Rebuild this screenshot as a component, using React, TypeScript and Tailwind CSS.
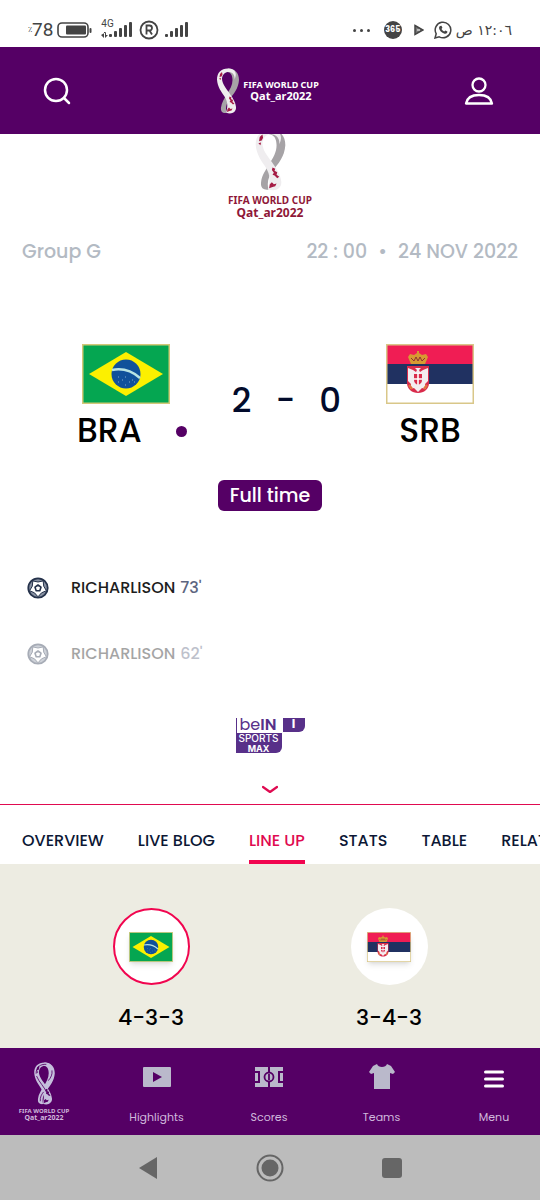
import React from "react";

type P = { className?: string };

function Trophy({ className, mono }: P & { mono?: boolean }) {
  const light = mono ? "#c5bfdc" : "#efedef";
  const dark = mono ? "#c5bfdc" : "#a6a3a6";
  const red = mono ? "#550065" : "#a51c45";
  return (
    <svg viewBox="0 0 44 92" className={className} aria-hidden="true" fill="none">
      <path d="M22 1C36 1 44 10 44 24C43 41 33 52 26 61C20 69 16 78 19 90C11 91 7 87 8 79C9 69 15 61 20 52C26 43 31 34 31 24C31 14 27 8 20 8Z" fill={dark} />
      <path d="M24 1C9 0 0 9 0 23C1 38 9 48 15 57C20 65 23 74 18 89C29 94 39 88 38 78C37 67 30 58 24 49C17 39 10 31 10 21C11 12 17 7 25 8C32 9 36 15 35 23C41 10 36 2 24 1Z" fill={light} />
      {mono && <path d="M4 25C4 12 12 4 26 5M5 30C10 43 22 53 28 68M30 40C36 33 39 27 38 18M13 84C12 75 16 69 20 64" stroke={red} strokeWidth="1.800" />}
      <path d="M6 12l4-4 1 5-2 4-4 1zM4 21l4-1-1 4zM25 57l4 2-1 3 4 2-1 4 4 3-3 2-4-4-3-1 2-3-3-4zM21 82l3-3 3 3 4-1-2 4-4 1-5 2z" fill={red} />
    </svg>
  );
}

function Brand({ className, yearClass }: P & { yearClass: string }) {
  return (
    <div className={className}>
      <div className="font-['Noto_Sans',sans-serif] font-bold">FIFA WORLD CUP</div>
      <div className={yearClass}>Qat_ar2022</div>
    </div>
  );
}

function Brazil({ className }: P) {
  return (
    <svg viewBox="0 0 88 60" className={className} role="img" aria-label="Brazil">
      <rect x="0.75" y="0.75" width="86.5" height="58.5" fill="#05a651" stroke="#d3c878" strokeWidth="1.5" />
      <path d="M7 30L44 8l37 22-37 22z" fill="#fcf000" />
      <circle cx="44" cy="30" r="14.5" fill="#10519b" />
      <path d="M30 26c10-2 20 1 28 8" stroke="#b9e4e4" strokeWidth="2.5" fill="none" />
      <path d="M36 33h1m3 3h1m2-3h1m3 5h1m2-2h1m-8 5h1m-8-3h1m15 0h1" stroke="#7fa9cf" strokeWidth="1" />
    </svg>
  );
}

function Serbia({ className }: P) {
  return (
    <svg viewBox="0 0 88 60" className={className} role="img" aria-label="Serbia">
      <rect width="88" height="60" fill="#fff" />
      <path d="M0 0h88v20H0z" fill="#f01d54" />
      <path d="M0 20h88v20H0z" fill="#203161" />
      <path d="M21 22h22v17c0 6-5 10-11 10-6 0-11-4-11-10z" fill="#d92b4b" />
      <path d="M32 48l-4-4-4 1 1-5-3-3V24l5 2 3 2 1-2-2-2h6l-2 2 1 2 3-2 5-2v13l-3 3 1 5-4-1z" fill="#f3edf0" />
      <path d="M28 30h8v6c0 3-2 4-4 5-2-1-4-2-4-5z" fill="#d92b4b" />
      <path d="M32 29v12m-4-6h8" stroke="#fff" strokeWidth="1.6" />
      <path d="M23 41l3 4m15-4l-3 4" stroke="#e0703f" strokeWidth="2.500" />
      <path d="M25 20l-3-7 2-3 4 1 3-2V7h2v2l3 2 4-1 2 3-3 7z" fill="#d79a32" />
      <path d="M25 14l3 3 2-4 2 4 2-4 2 4 3-3" stroke="#8d3034" fill="none" />
      <rect x="0.75" y="0.75" width="86.5" height="58.5" fill="none" stroke="#d9c789" strokeWidth="1.5" />
    </svg>
  );
}

function Ball() {
  return (
    <svg viewBox="0 0 22 22" className="h-[22px] w-[22px]" fill="none" stroke="#25324b" strokeLinejoin="round" aria-hidden="true">
      <circle cx="11" cy="11" r="9.7" fill="#8790a1" strokeWidth="1.800" />
      <path d="M11 5L16.200 3.900L16.700 9.150L19.400 13.700L14.500 15.850L11 19.800L7.500 15.850L2.600 13.700L5.300 9.150L5.800 3.900Z" fill="#fff" strokeWidth="1" />
      <path d="M11 8l3 2.200-1.200 3.500H9.200L8 10.200z" strokeWidth="1.600" />
    </svg>
  );
}

function Signal() {
  return (
    <svg viewBox="0 0 24 16" className="h-4 w-6" fill="#444" aria-hidden="true">
      <rect y="12" width="3" height="3" rx="1" />
      <rect x="5" y="9" width="3" height="6" rx="1" />
      <rect x="10" y="6" width="3" height="9" rx="1" />
      <rect x="15" y="3" width="3" height="12" rx="1" />
      <rect x="20" y="0" width="3" height="15" rx="1" />
    </svg>
  );
}

function StatusBar() {
  return (
    <div className="flex h-[47px] items-center justify-between px-7 pt-[13px] text-[#444]">
      <div className="flex items-center">
        <span className="text-[8px]">٪</span>
        <span className="font-['Roboto',sans-serif] text-[19px] leading-5">78</span>
        <svg viewBox="0 0 36 16" className="ml-1 h-4 w-9" fill="none" aria-hidden="true">
          <rect x="1" y="1" width="30" height="14" rx="4" stroke="#444" strokeWidth="1.6" />
          <rect x="9" y="3.500" width="20" height="9" rx="1" fill="#444" />
          <rect x="32.500" y="6" width="2" height="5" rx="1" fill="#444" />
        </svg>
        <div className="relative ml-4 flex items-center">
          <span className="absolute -top-1 -left-2 font-['Roboto',sans-serif] text-[10px] leading-3">4G</span>
          <svg viewBox="0 0 8 6" className="absolute bottom-0 -left-2 h-[6px] w-2" fill="#444" aria-hidden="true">
            <path d="M0 3l3 3V0H4v6l3-3H5V0" />
          </svg>
          <Signal />
        </div>
        <svg viewBox="0 0 20 20" className="ml-1.5 h-5 w-5" fill="none" stroke="#444" strokeWidth="1.800" aria-hidden="true">
          <circle cx="10" cy="10" r="8.500" />
          <path d="M7.500 14.500v-9h3a2.500 2.500 0 0 1 0 5h-3m3 0l2.500 4" />
        </svg>
        <span className="ml-1.5"><Signal /></span>
      </div>
      <div className="flex items-center">
        <span className="flex gap-1">
          <i className="h-[3px] w-[3px] rounded-full bg-[#444]" />
          <i className="h-[3px] w-[3px] rounded-full bg-[#444]" />
          <i className="h-[3px] w-[3px] rounded-full bg-[#444]" />
        </span>
        <span className="ml-[14px] flex h-[18px] w-[18px] items-center justify-center rounded-full bg-[#444] text-[8px] font-bold text-white">365</span>
        <svg viewBox="0 0 10 12" className="ml-3 h-3 w-[10px]" aria-hidden="true">
          <path d="M1 1.500l8 4.500-8 4.500z" fill="#777" stroke="#444" strokeWidth="1.500" />
          <path d="M3 6h3" stroke="#fff" />
        </svg>
        <svg viewBox="0 0 18 18" className="ml-[10px] h-[18px] w-[18px]" fill="none" aria-hidden="true">
          <path d="M1 17l1.200-4.200A7.800 7.800 0 1 1 5.200 15.800z" stroke="#444" strokeWidth="1.500" />
          <path d="M6 5l1.500-.3.900 2.100-.9 1.200c.7 1.300 1.500 2 2.700 2.600l1.200-1 2 1c0 1.700-1.400 2.500-2.800 2.100C7.500 12 5.300 9.500 5 7c0-.9.400-1.500 1-2z" fill="#444" />
        </svg>
        <span dir="rtl" className="ml-1 font-['DejaVu_Sans','Noto_Sans',sans-serif] text-sm leading-5">١٢:٠٦ ص</span>
      </div>
    </div>
  );
}

function ChannelLogo() {
  return (
    <div className="mx-auto w-[69px] text-[#583089]" role="group" aria-label="beIN Sports Max 1">
      <div className="flex h-[15px] items-start">
        <div className="h-[15px] w-[46px] border-l border-[#583089] pl-[3px] text-base leading-[13px]">be<b className="font-semibold">IN</b></div>
        <div className="ml-px h-[14px] w-[22px] rounded-br-md bg-[#583089] text-center text-xs leading-[12px] font-bold text-white">I</div>
      </div>
      <div className="h-5 w-[46px] rounded-br-md bg-[#583089] text-center font-['Inter',sans-serif] text-white">
        <div className="text-[10px] leading-[11px] font-medium">SPORTS</div>
        <div className="text-[9px] leading-[9px] font-bold">MAX</div>
      </div>
    </div>
  );
}

const goals = [
  { name: "RICHARLISON", minute: "73'", faded: false },
  { name: "RICHARLISON", minute: "62'", faded: true },
];

const tabs = ["OVERVIEW", "LIVE BLOG", "LINE UP", "STATS", "TABLE", "RELATED"];

export default function App() {
  return (
    <div className="flex min-h-screen flex-col overflow-x-hidden bg-white font-['Poppins','Inter',sans-serif] text-black">
      <StatusBar />
      <header className="flex h-[87px] items-center justify-between bg-[#550065] pr-[45px] pl-[41px] text-white">
        <button aria-label="Search" className="flex w-8 justify-center">
          <svg viewBox="0 0 28 28" className="h-7 w-7" fill="none" stroke="#fff" strokeWidth="2.500" strokeLinecap="round" aria-hidden="true">
            <circle cx="13" cy="13" r="11" />
            <path d="M21 21l5 5" />
          </svg>
        </button>
        <a href="#home" className="flex items-center gap-1" aria-label="Tournament home">
          <Trophy className="h-[46px] w-[22px]" />
          <Brand className="text-center text-[9px] leading-[10px]" yearClass="font-['Noto_Sans',sans-serif] text-[11px] leading-[11px] font-bold" />
        </a>
        <button aria-label="Account" className="flex w-8 justify-center">
          <svg viewBox="0 0 30 30" className="h-[30px] w-[30px]" fill="none" stroke="#fff" strokeWidth="2.300" strokeLinejoin="round" aria-hidden="true">
            <circle cx="15" cy="9" r="6.500" />
            <path d="M2 27.500c1-5.500 6-8.500 13-8.500s12 3 13 8.500z" />
          </svg>
        </button>
      </header>

      <main className="flex grow flex-col">
        <div className="flex h-[86px] flex-col items-center justify-end overflow-hidden text-[#8f1838]">
          <Trophy className="h-[62px] w-[31px] shrink-0" />
          <Brand className="mt-1 text-center text-[10px] leading-[11px]" yearClass="font-['Noto_Sans',sans-serif] text-xs leading-[14px] font-bold" />
        </div>
        <div className="mt-[18px] flex items-center justify-between px-[22px] text-[19px] leading-7 font-medium text-[#b3bac3]">
          <span>Group G</span>
          <span className="flex gap-[11px]"><span>22 : 00</span><span>•</span><span>24 NOV 2022</span></span>
        </div>

        <section className="mt-[78px] flex justify-between pr-[66px] pl-[65px] font-medium">
          <div className="flex w-[122px] flex-col items-center">
            <Brazil className="h-[60px] w-[88px]" />
            <div className="flex w-full items-center justify-between pl-3 text-[33px] leading-[54px]">
              <span>BRA</span>
              <i className="h-[11px] w-[11px] rounded-full bg-[#550065]" />
            </div>
          </div>
          <div className="flex gap-6 pt-9 text-[34px] leading-10 text-[#020b2b]">
            <span>2</span><span>-</span><span>0</span>
          </div>
          <div className="flex w-[88px] flex-col items-center">
            <Serbia className="h-[60px] w-[88px]" />
            <div className="text-[33px] leading-[54px]">SRB</div>
          </div>
        </section>
        <div className="mx-auto mt-[22px] rounded-md bg-[#550065] px-3 text-[19px] leading-[31px] font-medium text-white">Full time</div>

        <ul className="mt-[65px] px-[27px] font-medium">
          {goals.map((g) => (
            <li key={g.minute} className={g.faded ? "mt-[42px] flex items-center opacity-40" : "flex items-center"}>
              <Ball />
              <span className="ml-[22px] text-base leading-6 text-[#1d1d1d]">{g.name}</span>
              <span className="ml-[5px] text-base leading-6 text-[#5d6580]">{g.minute}</span>
            </li>
          ))}
        </ul>
        <div className="mt-[52px]"><ChannelLogo /></div>
        <button aria-label="Show more" className="mx-auto mt-7 flex h-[23px] w-10 justify-center pt-1">
          <svg viewBox="0 0 16 9" className="h-[9px] w-4" fill="none" stroke="#df0a50" strokeWidth="2.200" strokeLinecap="round" strokeLinejoin="round" aria-hidden="true"><path d="M1 2L8 7l7-5" /></svg>
        </button>

        <nav className="flex h-[60px] shrink-0 gap-[34px] overflow-hidden border-t border-t-[#e00a50] px-[22px] text-base font-medium text-[#0c1735]">
          {tabs.map((t) => (
            <a key={t} href="#tab" className={t === "LINE UP" ? "shrink-0 border-b-4 border-[#f1054f] pt-6 text-[#e00a50]" : "shrink-0 pt-6"}>{t}</a>
          ))}
        </nav>
        <section className="grid grow grid-cols-2 bg-[#edece2] px-8 pt-11 text-[22px] font-medium">
          <button className="flex flex-col items-center self-start">
            <span className="flex h-[77px] w-[77px] items-center justify-center rounded-full border-2 border-[#f1054f] bg-white"><Brazil className="h-[30px] w-11 shadow-md" /></span>
            <span className="mt-4">4-3-3</span>
          </button>
          <button className="flex flex-col items-center self-start">
            <span className="flex h-[77px] w-[77px] items-center justify-center rounded-full bg-white"><Serbia className="h-[30px] w-11 shadow-md" /></span>
            <span className="mt-4">3-4-3</span>
          </button>
        </section>
      </main>

      <nav className="flex h-[87px] shrink-0 justify-between bg-[#550065] pr-[18px] pl-4 text-[11px] text-[#d0b8dc]">
        <a href="#home" className="flex w-14 flex-col items-center pt-[14px]">
          <Trophy mono className="h-[43px] w-[21px]" />
          <Brand className="mt-[3px] text-center text-[6px] leading-[6px] whitespace-nowrap" yearClass="font-['Noto_Sans',sans-serif] text-[7px] leading-[7px] font-bold" />
        </a>
        <a href="#highlights" className="flex w-14 flex-col items-center justify-between pt-[19px] pb-[10px]">
          <svg viewBox="0 0 28 20" className="h-5 w-7" aria-hidden="true"><rect width="28" height="20" rx="1" fill="#bab9cb" /><path d="M10 5l9 5-9 5z" fill="#550065" /></svg>
          Highlights
        </a>
        <a href="#scores" className="flex w-14 flex-col items-center justify-between pt-[19px] pb-[10px]">
          <svg viewBox="0 0 28 20" className="h-5 w-7" fill="none" aria-hidden="true">
            <path d="M0 0h13v20H0v-4h5V4H0zM15 0h13v4h-5v12h5v4H15z" fill="#bab9cb" />
            <path d="M0 6h3v8H0zM25 6h3v8h-3z" fill="#bab9cb" />
            <circle cx="14" cy="10" r="4.500" fill="#bab9cb" stroke="#550065" strokeWidth="1.800" />
            <path d="M14 7v6" stroke="#550065" strokeWidth="1.800" />
          </svg>
          Scores
        </a>
        <a href="#teams" className="flex w-14 flex-col items-center justify-between pt-4 pb-[10px]">
          <svg viewBox="0 0 26 26" className="h-[26px] w-[26px]" fill="#bab9cb" aria-hidden="true"><path d="M8 0L4 2 0 8l2 2 3-1v16h16V9l3 1 2-2-4-6-4-2c-1 4-9 4-10 0z" /></svg>
          Teams
        </a>
        <button className="flex w-14 flex-col items-center justify-between pt-[22px] pb-[10px]">
          <svg viewBox="0 0 20 18" className="h-[18px] w-5" stroke="#fff" strokeWidth="3" strokeLinecap="round" aria-hidden="true"><path d="M1.500 2h17M1.500 9h17M1.500 16h17" /></svg>
          Menu
        </button>
      </nav>
      <div className="flex h-[65px] shrink-0 items-center justify-center gap-[98px] bg-[#bcbcbc]">
        <button aria-label="Back"><svg viewBox="0 0 20 24" className="h-6 w-5" aria-hidden="true"><path d="M19 1v22L1 12z" fill="#666" /></svg></button>
        <button aria-label="Home"><svg viewBox="0 0 28 28" className="h-7 w-7" aria-hidden="true"><circle cx="14" cy="14" r="12.500" fill="none" stroke="#666" strokeWidth="2" /><circle cx="14" cy="14" r="8.500" fill="#666" /></svg></button>
        <button aria-label="Recent apps"><svg viewBox="0 0 20 20" className="h-5 w-5" aria-hidden="true"><rect width="20" height="20" rx="3" fill="#666" /></svg></button>
      </div>
    </div>
  );
}
